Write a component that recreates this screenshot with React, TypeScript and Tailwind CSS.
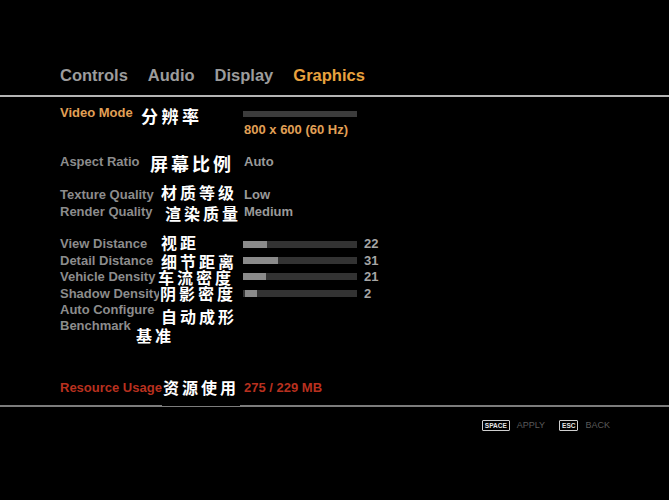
import React from 'react';

const zhFont = "font-['Noto_Sans_CJK_SC',sans-serif]";

type Slider = {
  label: string;
  zh: string;
  zhPos: string;
  fill: string;
  value: string;
};

const sliders: Slider[] = [
  { label: 'View Distance', zh: '视距', zhPos: 'left-[100px] top-[-1px]', fill: 'w-[24px]', value: '22' },
  { label: 'Detail Distance', zh: '细节距离', zhPos: 'left-[100px] top-[2px]', fill: 'w-[35px]', value: '31' },
  { label: 'Vehicle Density', zh: '车流密度', zhPos: 'left-[97px] top-[1px]', fill: 'w-[23px]', value: '21' },
  { label: 'Shadow Density', zh: '阴影密度', zhPos: 'left-[99px] top-[1px] bg-black', fill: 'ml-[2px] w-[12px]', value: '2' },
];

const Zh: React.FC<{ text: string; pos: string; size?: string }> = ({
  text,
  pos,
  size = 'text-[16px] leading-[15px] tracking-[3px]',
}) => (
  <span className={`absolute z-10 px-px text-white font-bold whitespace-nowrap ${zhFont} ${size} ${pos}`}>
    {text}
  </span>
);

const LabelCell: React.FC<{ text: string; color?: string; children?: React.ReactNode }> = ({
  text,
  color = 'text-[#8c8c8c]',
  children,
}) => (
  <div className={`relative w-[184px] shrink-0 h-full flex items-center text-[13px] font-bold whitespace-nowrap ${color}`}>
    {text}
    {children}
  </div>
);

export default function App() {
  return (
    <div className="w-[669px] h-[500px] bg-black overflow-hidden font-['Liberation_Sans',Arial,sans-serif]">
      {/* tabs */}
      <div className="pt-[65px] pl-[60px] flex gap-[20px] text-[16.5px] leading-[20px] font-bold">
        <span className="text-[#9c9c9c]">Controls</span>
        <span className="text-[#9c9c9c]">Audio</span>
        <span className="text-[#9c9c9c]">Display</span>
        <span className="text-[#e8a23e]">Graphics</span>
      </div>
      <div className="mt-[10px] h-[2px] bg-[#b4b4b4]" />

      <div className="pl-[60px]">
        {/* video mode */}
        <div className="mt-[8px] flex items-start">
          <div className="h-[16px]">
            <LabelCell text="Video Mode" color="text-[#e2a056]">
              <Zh text="分辨率" pos="left-[80px] top-[1px]" size="text-[17px] leading-[20px] tracking-[3.5px]" />
            </LabelCell>
          </div>
          <div className="flex flex-col">
            <div className="mt-[6px] ml-[-1px] w-[114px] h-[6px] bg-[#3c3c3c]" />
            <div className="mt-[5px] text-[13px] leading-[16px] font-bold text-[#e2a056]">800 x 600 (60 Hz)</div>
          </div>
        </div>

        {/* aspect */}
        <div className="mt-[16px] h-[16px] flex">
          <LabelCell text="Aspect Ratio">
            <Zh text="屏幕比例" pos="left-[89px] top-[-1px]" size="text-[18px] leading-[20px] tracking-[3px]" />
          </LabelCell>
          <div className="flex items-center text-[13px] font-bold text-[#9a9a9a]">Auto</div>
        </div>

        {/* quality */}
        <div className="mt-[17px] flex flex-col gap-[1px]">
          <div className="h-[16px] flex">
            <LabelCell text="Texture Quality">
              <Zh text="材质等级" pos="left-[100px] top-[-2px]" />
            </LabelCell>
            <div className="flex items-center text-[13px] font-bold text-[#9a9a9a]">Low</div>
          </div>
          <div className="h-[16px] flex">
            <LabelCell text="Render Quality">
              <Zh text="渲染质量" pos="left-[104px] top-[2px]" />
            </LabelCell>
            <div className="flex items-center text-[13px] font-bold text-[#9a9a9a]">Medium</div>
          </div>
        </div>

        {/* sliders */}
        <div className="mt-[16px] flex flex-col">
          {sliders.map(s => (
            <div key={s.label} className="h-[16.4px] flex">
              <LabelCell text={s.label}>
                <Zh text={s.zh} pos={s.zhPos} />
              </LabelCell>
              <div className="flex items-center">
                <div className="ml-[-1px] w-[114px] h-[7px] bg-[#333333] flex">
                  <div className={`h-full bg-[#8a8a8a] ${s.fill}`} />
                </div>
                <span className="ml-[7px] text-[13px] font-bold text-[#a6a6a6]">{s.value}</span>
              </div>
            </div>
          ))}
          <div className="h-[16.4px] flex">
            <LabelCell text="Auto Configure">
              <Zh text="自动成形" pos="left-[100px] top-[7px]" />
            </LabelCell>
          </div>
          <div className="h-[16.4px] flex">
            <LabelCell text="Benchmark">
              <Zh text="基准" pos="left-[75px] top-[10px]" />
            </LabelCell>
          </div>
        </div>

        {/* resource usage */}
        <div className="mt-[45px] h-[16px] flex">
          <LabelCell text="Resource Usage" color="text-[#b8301f]">
            <Zh text="资源使用" pos="left-[102px] top-[1px] pb-[11px] bg-black" />
          </LabelCell>
          <div className="flex items-center text-[13px] font-bold text-[#b8301f]">275 / 229 MB</div>
        </div>
      </div>

      <div className="mt-[10px] h-[2px] bg-[#7c7c7c]" />

      {/* footer */}
      <div className="mt-[12px] pr-[59px] flex justify-end items-center gap-[7px] text-[9px] leading-[12px]">
        <span className="border border-[#cfcfcf] rounded-[1px] px-[2px] text-[6.5px] leading-[9px] font-bold text-[#e6e6e6]">SPACE</span>
        <span className="text-[#5a5a5a] mr-[7px]">APPLY</span>
        <span className="border border-[#cfcfcf] rounded-[1px] px-[2px] text-[6.5px] leading-[9px] font-bold text-[#e6e6e6]">ESC</span>
        <span className="text-[#5a5a5a]">BACK</span>
      </div>
    </div>
  );
}
